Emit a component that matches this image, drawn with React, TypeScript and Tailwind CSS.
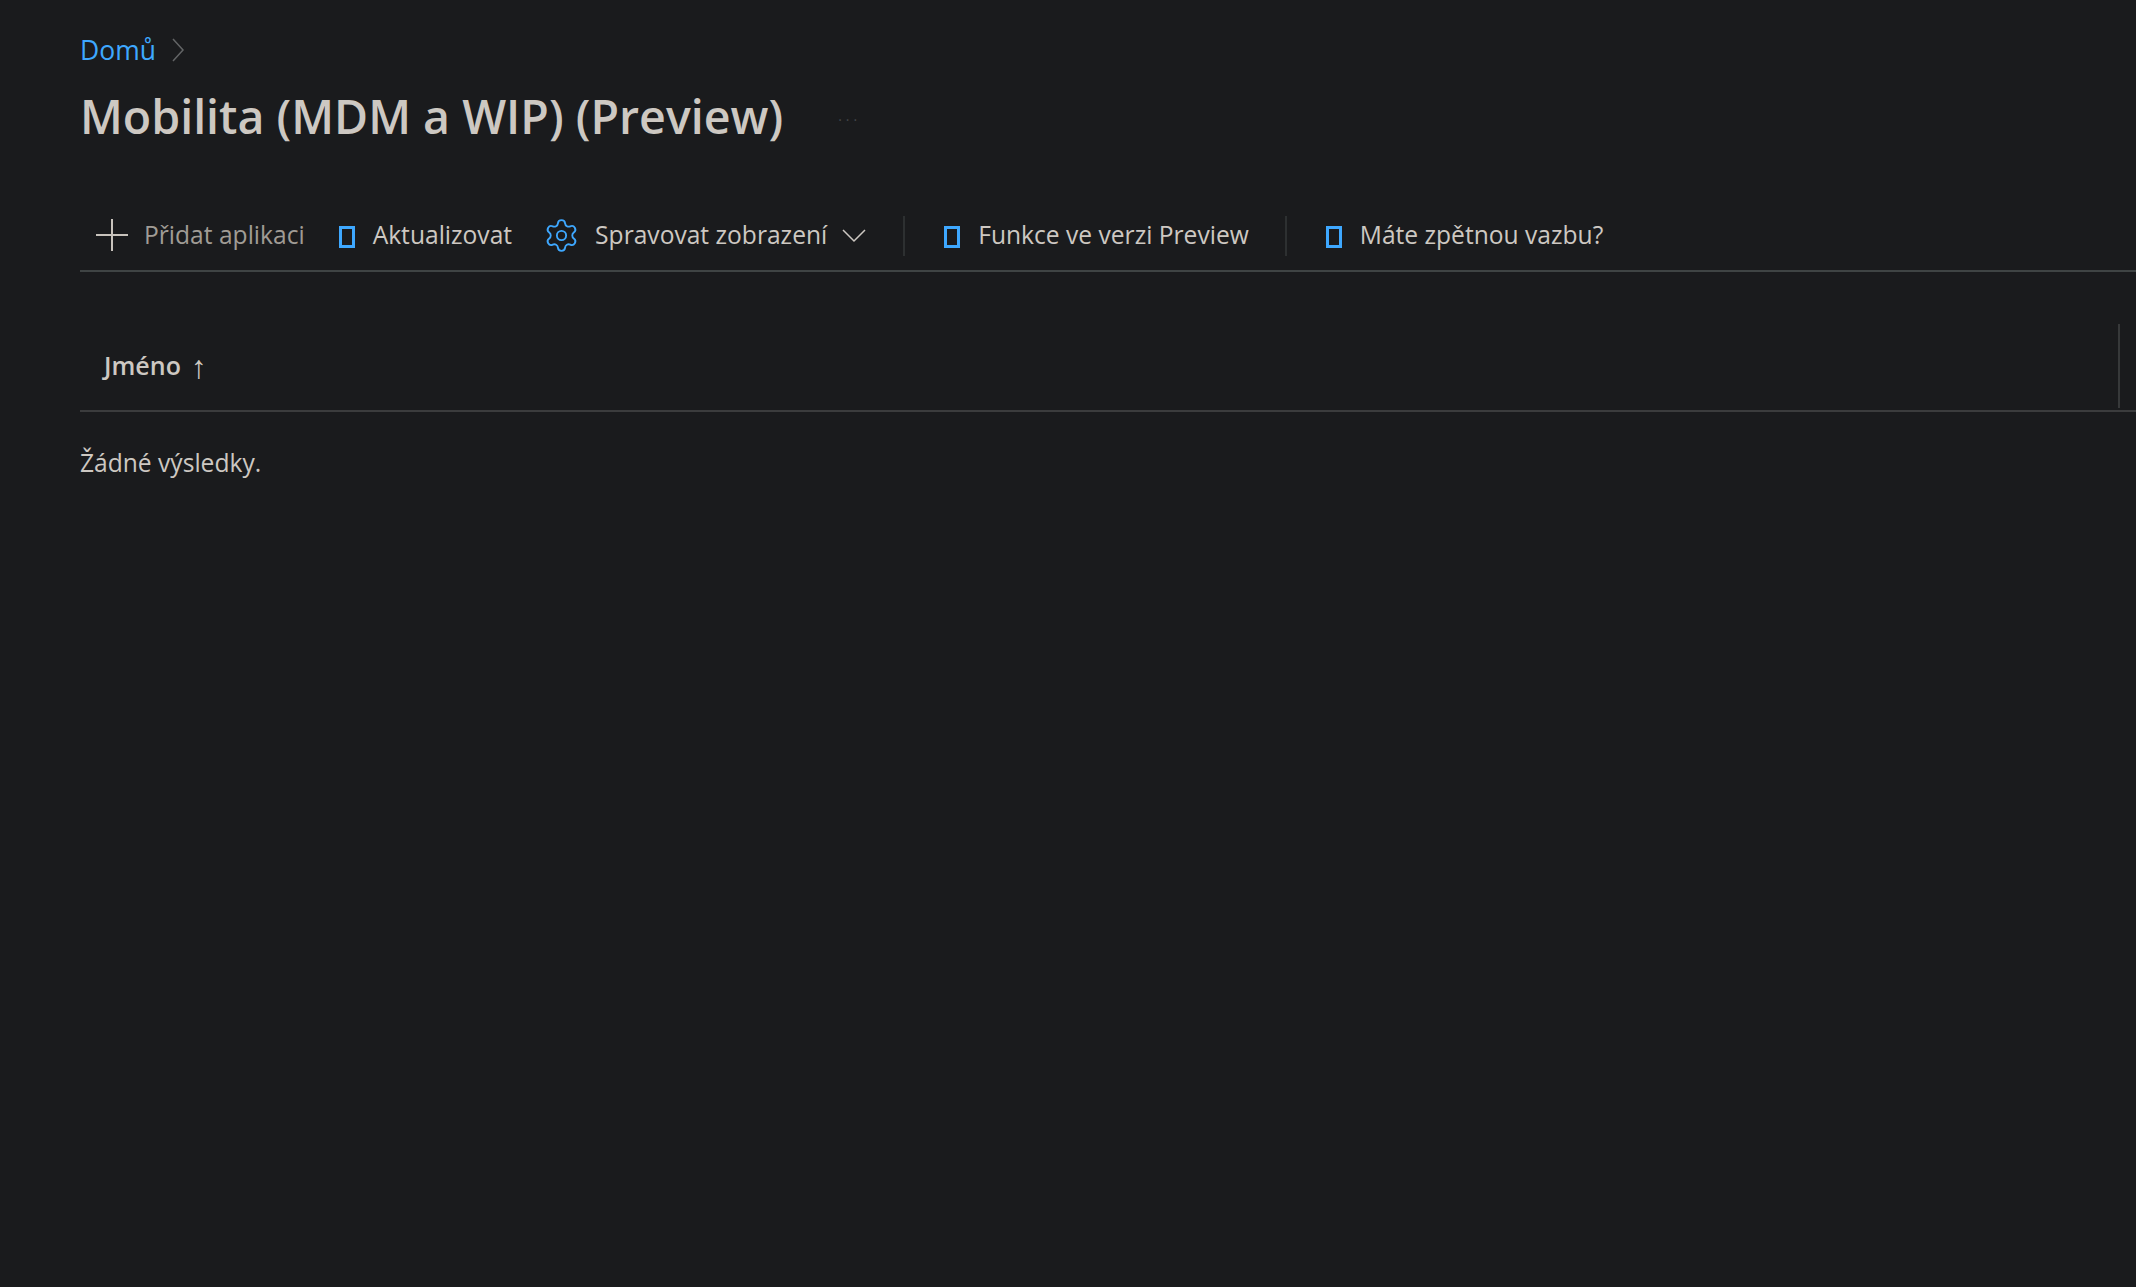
import { Settings } from "lucide-react";

function Tofu() {
  return <span className="mt-1 h-[22px] w-4 shrink-0 border-[3px] border-[#3ea8ff]" />;
}

function Divider() {
  return <div className="h-10 w-0.5 shrink-0 bg-[#2d3031]" />;
}

export default function App() {
  return (
    <div className="h-[1287px] overflow-hidden bg-[#1a1b1d] pl-20 font-['Open_Sans','Noto_Sans',sans-serif] text-[#cdc8c2]">
      <div className="flex h-[68px] items-end gap-[15px] text-[26.5px] leading-9">
        <a className="text-[#3ea8ff]">Domů</a>
        <svg width="14" height="24" viewBox="0 0 14 24" fill="none" stroke="#636566" strokeWidth="1.5" className="mb-1.5">
          <path d="M2 1l10 11L2 23" />
        </svg>
      </div>
      <div className="mt-[16px] flex h-16 items-center">
        <h1 className="text-[46.5px] leading-16 font-semibold">Mobilita (MDM a WIP) (Preview)</h1>
        <span className="ml-[55px] text-sm leading-none tracking-[4px] text-[#44474a]">...</span>
      </div>
      <div className="mt-[55px] flex h-[69px] items-center border-b-2 border-[#3f4444] pb-[2px] text-[24.6px]">
        <div className="ml-4 flex items-center gap-4 text-[#a09c95]">
          <svg width="32" height="32" viewBox="0 0 32 32" stroke="#c8c3bc" strokeWidth="2">
            <path d="M0 16h32M16 0v32" />
          </svg>
          <span>Přidat aplikaci</span>
        </div>
        <div className="ml-[34px] flex items-center gap-[18px]">
          <Tofu />
          <span>Aktualizovat</span>
        </div>
        <div className="ml-[31px] flex items-center gap-[15px]">
          <Settings size={37} strokeWidth={1.2} className="text-[#3ea8ff]" />
          <span>Spravovat zobrazení</span>
        </div>
        <svg width="24" height="14" viewBox="0 0 24 14" fill="none" stroke="#cdc8c2" strokeWidth="1.5" className="ml-[15px]">
          <path d="M1 1l11 11L23 1" />
        </svg>
        <div className="ml-[37px]"><Divider /></div>
        <div className="ml-[39px] flex items-center gap-[18px]">
          <Tofu />
          <span>Funkce ve verzi Preview</span>
        </div>
        <div className="ml-9"><Divider /></div>
        <div className="ml-[39px] flex items-center gap-[18px]">
          <Tofu />
          <span>Máte zpětnou vazbu?</span>
        </div>
      </div>
      <div className="mt-[52px] flex h-[88px] items-start justify-between border-b-2 border-[#3b3c3d]">
        <div className="flex h-[84px] items-center gap-2.5 pl-6 text-[25px] font-semibold">
          <span>Jméno</span>
          <span className="text-[32px] leading-none font-normal">↑</span>
        </div>
        <div className="mr-4 h-[84px] w-0.5 bg-[#37393a]" />
      </div>
      <p className="mt-[33px] text-[24.6px] leading-9">Žádné výsledky.</p>
    </div>
  );
}
